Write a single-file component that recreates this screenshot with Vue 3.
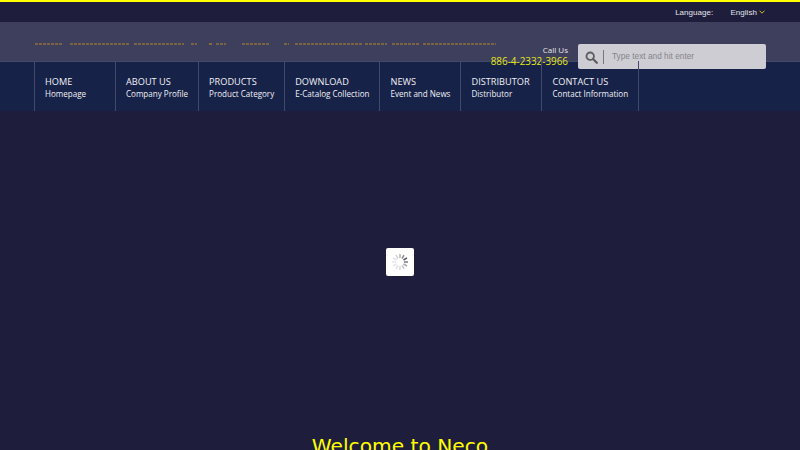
<script setup>
const menu = [
  { title: 'HOME', sub: 'Homepage' },
  { title: 'ABOUT US', sub: 'Company Profile' },
  { title: 'PRODUCTS', sub: 'Product Category' },
  { title: 'DOWNLOAD', sub: 'E-Catalog Collection' },
  { title: 'NEWS', sub: 'Event and News' },
  { title: 'DISTRIBUTOR', sub: 'Distributor' },
  { title: 'CONTACT US', sub: 'Contact Information' }
]
const logoRuns = [[0,28],[35,94],[99,149],[156,162],[174,177],[181,191],[207,235],[249,254],[260,327],[330,352],[357,384],[388,461]]
const ticks = Array.from({ length: 12 }, (_, i) => ({
  angle: i * 30,
  opacity: [0.4, 0.6, 0.85, 0.7, 0.45, 0.3, 0.2, 0.15, 0.12, 0.12, 0.15, 0.25][i]
}))
</script>

<template>
  <div class="page">
    <div class="topbar">
      <span class="lang-label">Language:</span>
      <span class="lang-value">English</span>
      <svg class="chev" width="6" height="4" viewBox="0 0 6 4"><path d="M.5.7 3 3.2 5.5.7" fill="none" stroke="#c8c820" stroke-width="1"/></svg>
    </div>

    <header class="header">
      <svg class="logo" width="462" height="2" viewBox="0 0 462 2" role="img" aria-label="Company name">
        <line v-for="r in logoRuns" :key="r[0]" :x1="r[0]" :x2="r[1]" y1="1" y2="1" stroke="#b88a2c" stroke-width="1.2" stroke-dasharray="3 1"/>
      </svg>
      <div class="call">
        <span class="call-label">Call Us</span>
        <span class="call-num">886-4-2332-3966</span>
      </div>
      <div class="search">
        <svg class="glass" width="13" height="13" viewBox="0 0 15 15"><circle cx="6" cy="6" r="4.3" fill="none" stroke="#5e5e60" stroke-width="2.1"/><path d="M9.3 9.3 13.6 13.6" stroke="#5e5e60" stroke-width="2.6" stroke-linecap="round"/></svg>
        <span class="divider"></span>
        <input class="field" type="text" placeholder="Type text and hit enter" />
      </div>
    </header>

    <nav class="nav">
      <ul class="menu">
        <li v-for="m in menu" :key="m.title" class="item">
          <span class="title">{{ m.title }}</span>
          <span class="sub">{{ m.sub }}</span>
        </li>
      </ul>
    </nav>

    <section class="hero">
      <div class="loader">
        <svg width="18" height="18" viewBox="-9 -9 18 18">
          <line v-for="t in ticks" :key="t.angle" x1="0" y1="-4" x2="0" y2="-8" stroke="#444" stroke-width="1.5" :opacity="t.opacity" :transform="`rotate(${t.angle})`"/>
        </svg>
      </div>
    </section>

    <h1 class="welcome">Welcome to Neco</h1>
  </div>
</template>

<style>
html, body { margin: 0; background: #1e1e3c; }
</style>

<style scoped>
.page {
  background: #1e1e3c;
  border-top: 2px solid #ffff00;
  font-family: "Open Sans", sans-serif;
  min-height: 448px;
  overflow: hidden;
}
.topbar {
  height: 20px;
  display: flex;
  align-items: center;
  justify-content: flex-end;
  padding-right: 35px;
  font-family: "Liberation Sans", sans-serif;
  font-size: 8px;
  letter-spacing: 0.05px;
  color: #e4e4ea;
}
.lang-value { margin-left: 17px; }
.chev { margin-left: 2px; }
.header {
  position: relative;
  z-index: 1;
  height: 39px;
  background: #3d3f5c;
  display: flex;
  align-items: flex-start;
  padding: 0 34px 0 35px;
}
.logo { margin: 21px -40px 0 0; flex: none; display: block; }
.call {
  margin-left: auto;
  margin-right: 10px;
  margin-top: 22px;
  display: flex;
  flex-direction: column;
  align-items: flex-end;
  flex: none;
}
.call-label { font-size: 8px; line-height: 12px; color: #e6e6ea; }
.call-num { font-size: 9.9px; line-height: 10px; color: #e5e51a; }
.search {
  flex: none;
  width: 188px;
  height: 25px;
  margin-top: 22px;
  box-sizing: border-box;
  background: #cdcdd3;
  border-radius: 2px;
  display: flex;
  align-items: center;
  padding-left: 7px;
}
.glass { flex: none; margin-top: 1px; }
.divider { flex: none; width: 1px; height: 14px; background: #77777c; margin-left: 5px; }
.field {
  flex: 1;
  min-width: 0;
  margin: -2px 0 0 8px;
  border: 0;
  padding: 0;
  background: transparent;
  outline: none;
  font-family: "Liberation Sans", sans-serif;
  font-size: 8.3px;
  color: #55555a;
}
.field::placeholder { color: #85858b; opacity: 1; }
.nav {
  height: 50px;
  background: #172249;
  border-top: 1px solid #414a6b;
  box-sizing: border-box;
  padding-left: 34px;
}
.menu {
  position: relative;
  z-index: 2;
  list-style: none;
  margin: -1px 0 0;
  padding: 0;
  display: flex;
  height: 50px;
  border-right: 1px solid #414a6b;
  width: max-content;
}
.item {
  border-left: 1px solid #414a6b;
  padding: 14px 10px 0;
  min-width: 60px;
  display: flex;
  flex-direction: column;
  color: #f0f0f4;
}
.title { font-size: 9.2px; line-height: 13px; white-space: nowrap; }
.sub { font-size: 8.05px; line-height: 12px; white-space: nowrap; }
.hero {
  height: 301px;
  display: flex;
  align-items: center;
  justify-content: center;
}
.loader {
  width: 28px;
  height: 28px;
  background: #fff;
  border-radius: 2px;
  display: flex;
  align-items: center;
  justify-content: center;
}
.welcome {
  margin: 20px 0 0;
  text-align: center;
  font-family: "DejaVu Sans", sans-serif;
  font-weight: 400;
  font-size: 20.2px;
  line-height: 28px;
  color: #ffff00;
}
</style>
